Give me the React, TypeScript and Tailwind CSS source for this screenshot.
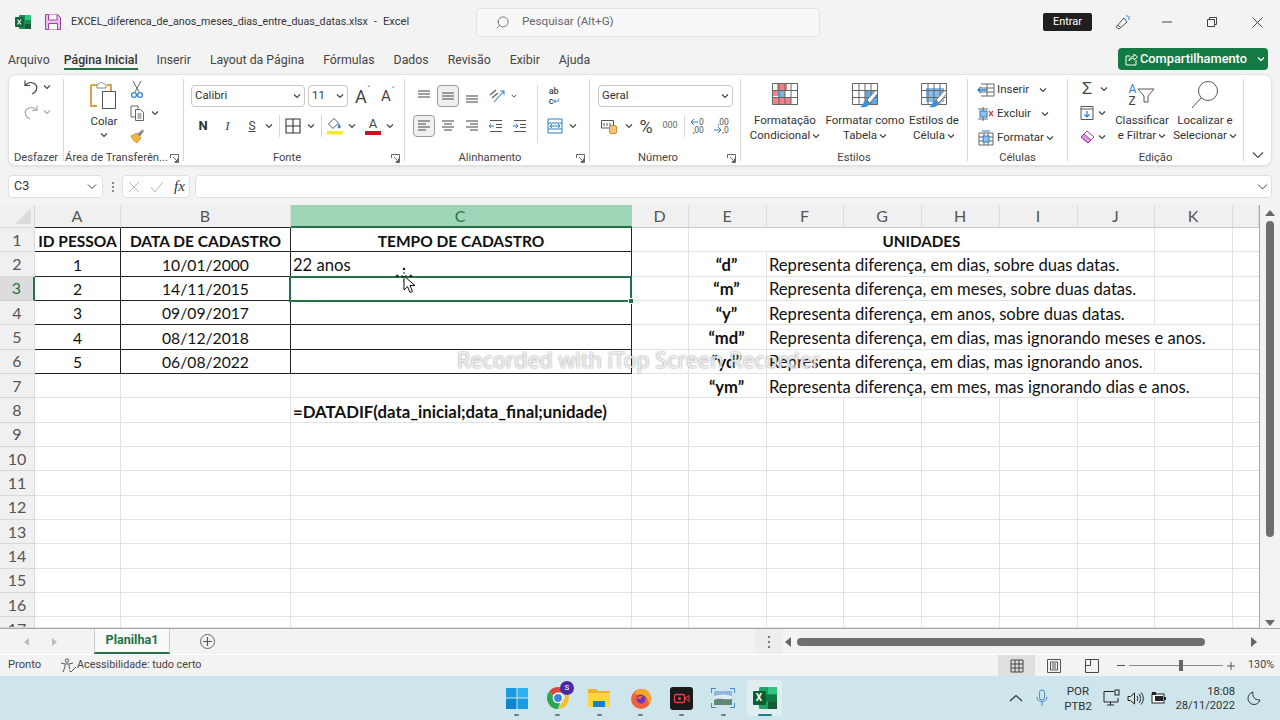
import type { ReactNode } from "react";
import { Search } from "lucide-react";

const ui = "font-['Roboto',sans-serif]";
const cellFont = "font-['Lato',sans-serif]";

function Chev({ color = "#444" }: { color?: string }) {
  return (
    <svg width="8" height="8" viewBox="0 0 8 8">
      <path d="M1 2.5 4 5.5 7 2.5" stroke={color} strokeWidth="1.2" fill="none" />
    </svg>
  );
}

function Launcher() {
  return (
    <svg width="9" height="9" viewBox="0 0 9 9">
      <path d="M.5 4V.5H8.5V8.5H5M3 3l4.5 4.5M7.5 4.5v3h-3" stroke="#666" fill="none" strokeWidth="1" />
    </svg>
  );
}

function Lines({ rows }: { rows: [number, number, number][] }) {
  return (
    <svg width="16" height="16" viewBox="0 0 16 16">
      {rows.map(([y, x1, x2], i) => (
        <path key={i} d={`M${x1} ${y}H${x2}`} stroke="#555" strokeWidth="1.1" />
      ))}
    </svg>
  );
}

function Group({ className, label, launcher, children }: { className: string; label: string; launcher?: boolean; children: ReactNode }) {
  return (
    <div className={`flex flex-col h-full shrink-0 ${className}`}>
      <div className="h-[76px] shrink-0">{children}</div>
      <div className="flex items-center h-[14px] shrink-0">
        <span className="flex-1 text-center text-[11.2px] leading-[14px] text-[#444] whitespace-nowrap">{label}</span>
        {launcher && (
          <span className="w-[14px] shrink-0 flex justify-start pl-[1px]">
            <Launcher />
          </span>
        )}
      </div>
    </div>
  );
}

function Sep() {
  return <div className="w-px my-[4px] bg-[#dadada] shrink-0" />;
}

function Select({ text }: { text: string }) {
  return (
    <div className="flex items-center justify-between h-[22px] bg-white border border-[#c9c9c9] rounded-[4px] px-[3px] text-[11.4px] text-[#333]">
      <span>{text}</span>
      <Chev />
    </div>
  );
}

function Slot({ className, children }: { className: string; children?: ReactNode }) {
  return <div className={`flex items-center justify-center h-[22px] shrink-0 ${className}`}>{children}</div>;
}

function BigBtn({ className, icon, l1, l2 }: { className: string; icon: ReactNode; l1: string; l2: string }) {
  return (
    <div className={`flex flex-col items-center shrink-0 pt-[7px] ${className}`}>
      <div className="h-[28px] flex items-center">{icon}</div>
      <div className="mt-[3px] text-[11.5px] leading-[15px] text-[#333] text-center whitespace-nowrap">{l1}</div>
      <div className="flex items-center gap-[2px] text-[11.5px] leading-[15px] text-[#333] whitespace-nowrap">
        {l2}
        <Chev />
      </div>
    </div>
  );
}

function StyleGrid({ kind }: { kind: "cond" | "table" | "cell" }) {
  return (
    <svg width="28" height="28" viewBox="0 0 28 28">
      {kind === "cond" && (
        <>
          <rect x="6" y="2" width="10" height="6" fill="#f2808a" />
          <rect x="2" y="8" width="8" height="6" fill="#f2808a" />
          <rect x="7" y="9" width="7" height="6" fill="#7fb2e0" />
          <rect x="2" y="15" width="18" height="8" fill="#f2808a" />
        </>
      )}
      {kind === "table" && <rect x="14" y="8" width="12" height="14" fill="#63a9e6" />}
      {kind === "cell" && <rect x="6" y="6" width="18" height="14" fill="#86bdee" />}
      <path d="M1.5 1.5H26.5V22.5H1.5ZM1.5 8.5H26.5M1.5 15.5H26.5M8 1.5V22.5M14 1.5V22.5M20 1.5V22.5" stroke="#666" fill="none" strokeWidth="1" />
      {kind !== "cond" && (
        <>
          <path d="M25 8 16 18l3 3L27 11Z" fill="#fff" stroke="#777" strokeWidth="1" />
          <path d="M15 18c-3 1-2 5-6 7 4 1 9 0 10-4Z" fill="#3f8fd6" />
        </>
      )}
    </svg>
  );
}

function Ribbon() {
  return (
    <div className={`mx-[8px] h-[92px] flex bg-white border border-[#e2e2e2] rounded-[8px] shadow-[0_1px_2px_rgba(0,0,0,0.08)] ${ui}`}>
      <Group className="w-[54px]" label="Desfazer">
        <div className="flex flex-col pl-[13px]">
          <div className="flex items-center h-[24px]">
            <svg width="18" height="18" viewBox="0 0 18 18">
              <path d="M3 2.5v5h5M3.2 7.2C6 4.2 10 3.6 13 6c2.6 2.2 2.2 6-.4 8.5L10 16" stroke="#444" fill="none" strokeWidth="1.2" />
            </svg>
            <span className="ml-[3px]"><Chev /></span>
          </div>
          <div className="flex items-center h-[24px] mt-[1px]">
            <svg width="18" height="18" viewBox="0 0 18 18">
              <path d="M15 2.5v5h-5M14.8 7.2C12 4.2 8 3.6 5 6c-2.6 2.2-2.2 6 .4 8.5L8 16" stroke="#aaa" fill="none" strokeWidth="1.2" />
            </svg>
            <span className="ml-[3px]"><Chev color="#aaa" /></span>
          </div>
        </div>
      </Group>
      <Sep />
      <Group className="w-[119px]" label="Área de Transferên..." launcher>
        <div className="flex pt-[5px]">
          <div className="w-[62px] pl-[18px] flex flex-col items-center">
            <svg width="30" height="30" viewBox="0 0 30 30">
              <path d="M2 5h6M18 5h4v6M8 26H2V5" stroke="#d9a24a" fill="#fff" strokeWidth="2" />
              <path d="M8 5c0-1 1-1 2-1 1-2 4-2 5 0 1 0 2 0 2 1v3H8Z" fill="#fff" stroke="#888" strokeWidth="1" />
              <rect x="13.5" y="11.5" width="13" height="17" fill="#fff" stroke="#555" strokeWidth="1" />
            </svg>
            <div className="text-[11.5px] leading-[15px] text-[#333] mt-[4px]">Colar</div>
            <div className="mt-[2px]"><Chev /></div>
          </div>
          <div className="flex flex-col items-start pl-[2px]">
            <svg width="18" height="20" viewBox="0 0 18 20">
              <path d="M5 1 11 12M13 1 7 12" stroke="#666" strokeWidth="1" />
              <circle cx="6" cy="15" r="2.4" fill="none" stroke="#3a86c8" strokeWidth="1.3" />
              <circle cx="12" cy="15" r="2.4" fill="none" stroke="#3a86c8" strokeWidth="1.3" />
            </svg>
            <div className="flex items-center h-[24px] mt-[1px]">
              <svg width="18" height="18" viewBox="0 0 18 18">
                <path d="M7 13H3V2h7v3" fill="none" stroke="#666" />
                <path d="M7.5 5.5h5l3 3v8h-8Z M9.5 10h4M9.5 12h4M9.5 14h4" fill="none" stroke="#666" />
              </svg>
              <span className="ml-[5px]"><Chev /></span>
            </div>
            <svg width="18" height="18" viewBox="0 0 18 18" className="mt-[2px]">
              <path d="M9 6 3 9c1 3 3 5 6 7l4-5Z" fill="#f2b544" stroke="#b98220" strokeWidth=".7" />
              <path d="M9.5 7l2.5 2.5L16 4l-1.6-1.6Z" fill="#888" />
            </svg>
          </div>
        </div>
      </Group>
      <Sep />
      <Group className="w-[220px]" label="Fonte" launcher>
        <div className="flex flex-col gap-[8px] pt-[10px] pl-[7px]">
          <div className="flex items-center">
            <div className="w-[114px]"><Select text="Calibri" /></div>
            <div className="w-[40px] ml-[3px]"><Select text="11" /></div>
            <Slot className="w-[26px] ml-[2px] text-[18px] text-[#444]">
              <span>A</span><span className="text-[9px] text-[#666] -mt-[10px]">ˆ</span>
            </Slot>
            <Slot className="w-[24px] text-[15px] text-[#444]">
              <span>A</span><span className="text-[9px] text-[#3a86c8] -mt-[9px]">ˇ</span>
            </Slot>
          </div>
          <div className="flex items-center">
            <Slot className="w-[24px] font-bold text-[13px] text-[#333]">N</Slot>
            <Slot className="w-[25px] italic text-[13px] text-[#444] font-['Liberation_Serif',serif]">I</Slot>
            <Slot className="w-[24px] underline text-[12px] text-[#444]">S</Slot>
            <Slot className="w-[10px]"><Chev /></Slot>
            <div className="w-[5px]" />
            <div className="w-px h-[22px] bg-[#d8d8d8]" />
            <Slot className="w-[26px]">
              <svg width="16" height="16" viewBox="0 0 16 16">
                <path d="M1 1H15V15H1ZM8 1V15M1 8H15" stroke="#333" fill="none" strokeWidth="1.1" />
              </svg>
            </Slot>
            <Slot className="w-[10px]"><Chev /></Slot>
            <div className="w-[5px]" />
            <div className="w-px h-[22px] bg-[#d8d8d8]" />
            <Slot className="w-[26px]">
              <svg width="18" height="18" viewBox="0 0 18 18">
                <path d="M8 1.5 2.5 7 7 11.5 12.5 6Z" fill="#fff" stroke="#555" />
                <path d="M13 6.5c1 1.4 1.8 2.4 1.8 3.2a1.6 1.6 0 0 1-3.2 0c0-.8.6-1.6 1.4-3.2Z" fill="#3a86c8" />
                <rect x="1" y="14" width="16" height="3.5" fill="#f5ea2e" />
              </svg>
            </Slot>
            <Slot className="w-[8px]"><Chev /></Slot>
            <div className="w-[5px]" />
            <Slot className="w-[24px]">
              <div className="flex flex-col items-center w-[16px]">
                <span className="text-[13px] leading-[13px] text-[#444]">A</span>
                <div className="w-[16px] h-[4px] bg-[#c8141e] mt-[1px]" />
              </div>
            </Slot>
            <Slot className="w-[10px]"><Chev /></Slot>
          </div>
        </div>
      </Group>
      <Sep />
      <Group className="w-[184px]" label="Alinhamento" launcher>
        <div className="flex pt-[10px] pl-[8px]">
          <div className="flex flex-col gap-[8px]">
            <div className="flex items-center gap-[2px]">
              <Slot className="w-[22px]"><Lines rows={[[3, 2, 14], [6, 2, 14], [9, 2, 14]]} /></Slot>
              <Slot className="w-[22px] bg-[#f0f0f0] border border-[#9a9a9a] rounded-[4px]"><Lines rows={[[5, 2, 14], [8, 2, 14], [11, 2, 14]]} /></Slot>
              <Slot className="w-[22px]"><Lines rows={[[8, 2, 14], [11, 2, 14], [14, 2, 14]]} /></Slot>
              <Slot className="w-[24px]">
                <svg width="18" height="16" viewBox="0 0 18 16">
                  <path d="M2 7 8 2M4 10l6-5" stroke="#666" strokeWidth="1.3" />
                  <path d="M6 14 16 3M12 3h4v4" stroke="#3a86c8" fill="none" strokeWidth="1.1" />
                </svg>
              </Slot>
              <Slot className="w-[6px]"><Chev /></Slot>
            </div>
            <div className="flex items-center gap-[2px]">
              <Slot className="w-[22px] bg-[#f0f0f0] border border-[#9a9a9a] rounded-[4px]"><Lines rows={[[3, 2, 14], [6, 2, 10], [9, 2, 14], [12, 2, 10]]} /></Slot>
              <Slot className="w-[22px]"><Lines rows={[[3, 2, 14], [6, 4, 12], [9, 2, 14], [12, 4, 12]]} /></Slot>
              <Slot className="w-[22px]"><Lines rows={[[3, 2, 14], [6, 6, 14], [9, 2, 14], [12, 6, 14]]} /></Slot>
              <Slot className="w-[22px]">
                <svg width="16" height="16" viewBox="0 0 16 16">
                  <path d="M2 2.5H14M8 6.5H14M8 9.5H14M2 13.5H14" stroke="#555" />
                  <path d="M6 8H1M3 6 1 8l2 2" stroke="#2b7fc4" fill="none" />
                </svg>
              </Slot>
              <Slot className="w-[22px]">
                <svg width="16" height="16" viewBox="0 0 16 16">
                  <path d="M2 2.5H14M8 6.5H14M8 9.5H14M2 13.5H14" stroke="#555" />
                  <path d="M1 8H6M4 6l2 2-2 2" stroke="#2b7fc4" fill="none" />
                </svg>
              </Slot>
            </div>
          </div>
          <div className="w-[6px]" />
          <div className="w-px h-[58px] bg-[#d8d8d8]" />
          <div className="flex flex-col gap-[8px] pl-[6px]">
            <Slot className="w-[22px]">
              <div className="text-[9px] leading-[10px] text-[#444] font-medium">ab<br />c<span className="text-[#2b7fc4]">↵</span></div>
            </Slot>
            <div className="flex items-center">
              <Slot className="w-[22px]">
                <svg width="16" height="16" viewBox="0 0 16 16">
                  <path d="M1 1H15V15H1ZM1 5H15M1 11H15" stroke="#2b7fc4" fill="none" />
                  <path d="M3 8H13M5 6 3 8l2 2M11 6l2 2-2 2" stroke="#2b7fc4" fill="none" />
                </svg>
              </Slot>
              <Slot className="w-[12px] pl-[2px]"><Chev /></Slot>
            </div>
          </div>
        </div>
      </Group>
      <Sep />
      <Group className="w-[150px]" label="Número" launcher>
        <div className="flex flex-col gap-[8px] pt-[10px] pl-[8px]">
          <div className="w-[135px]"><Select text="Geral" /></div>
          <div className="flex items-center">
            <Slot className="w-[20px] ml-[1px]">
              <svg width="16" height="16" viewBox="0 0 16 16">
                <path d="M.5 2.5H12.5V10H.5Z" fill="#fff" stroke="#555" />
                <path d="M3 5v3M6 5v3M9 5v3" stroke="#555" />
                <rect x="8.5" y="7.5" width="7" height="8" rx="1.5" fill="#f6c178" stroke="#d08a2e" />
              </svg>
            </Slot>
            <Slot className="w-[14px] pl-[6px]"><Chev /></Slot>
            <Slot className="w-[26px] text-[18px] text-[#444]">%</Slot>
            <Slot className="w-[22px] text-[9px] text-[#666]">000</Slot>
            <div className="w-px h-[22px] bg-[#d8d8d8] ml-[3px]" />
            <Slot className="w-[24px]">
              <div className="flex flex-col items-end text-[8.5px] leading-[8px] text-[#555]">
                <div className="flex items-center">
                  <svg width="9" height="8" viewBox="0 0 9 8">
                    <path d="M8 4H1M4 1 1 4l3 3" stroke="#2b7fc4" fill="none" />
                  </svg>
                  0
                </div>
                <div>,00</div>
              </div>
            </Slot>
            <Slot className="w-[24px]">
              <div className="flex flex-col items-end text-[8.5px] leading-[8px] text-[#555]">
                <div>,00</div>
                <div className="flex items-center">
                  <svg width="9" height="8" viewBox="0 0 9 8">
                    <path d="M1 4H8M5 1l3 3-3 3" stroke="#2b7fc4" fill="none" />
                  </svg>
                  ,0
                </div>
              </div>
            </Slot>
          </div>
        </div>
      </Group>
      <Sep />
      <Group className="w-[226px]" label="Estilos">
        <div className="flex">
          <BigBtn className="w-[88px]" icon={<StyleGrid kind="cond" />} l1="Formatação" l2="Condicional" />
          <BigBtn className="w-[72px]" icon={<StyleGrid kind="table" />} l1="Formatar como" l2="Tabela" />
          <BigBtn className="w-[66px]" icon={<StyleGrid kind="cell" />} l1="Estilos de" l2="Célula" />
        </div>
      </Group>
      <Sep />
      <Group className="w-[99px]" label="Células">
        <div className="flex flex-col pt-[3px] pl-[9px] text-[11.5px] text-[#333]">
          <div className="flex items-center h-[24px]">
            <svg width="18" height="16" viewBox="0 0 18 16" className="mr-[2px]">
              <path d="M4 2H17V14H4M4 6H17M4 10H17M10 2V14" stroke="#666" fill="none" />
              <path d="M10 8H1M4 5 1 8l3 3" stroke="#2b7fc4" fill="none" strokeWidth="1.3" />
            </svg>
            Inserir
            <span className="ml-[10px]"><Chev /></span>
          </div>
          <div className="flex items-center h-[24px]">
            <svg width="18" height="16" viewBox="0 0 18 16" className="mr-[2px]">
              <path d="M1 3H11M1 13H11M6 1V15" stroke="#666" fill="none" />
              <rect x="3" y="5" width="7" height="6" fill="#8ec2ec" stroke="#2b7fc4" />
              <path d="M12 5l4 5M16 5l-4 5" stroke="#d8434c" strokeWidth="1.3" />
            </svg>
            Excluir
            <span className="ml-[10px]"><Chev /></span>
          </div>
          <div className="flex items-center h-[24px]">
            <svg width="18" height="16" viewBox="0 0 18 16" className="mr-[2px]">
              <path d="M2 3H16V15H2ZM2 7H16M2 11H16M7 3V15M11 3V15" stroke="#666" fill="none" />
              <rect x="6" y="6" width="6" height="6" fill="#8ec2ec" stroke="#2b7fc4" />
              <path d="M5 1H13" stroke="#2b7fc4" />
            </svg>
            Formatar
            <span className="ml-[2px]"><Chev /></span>
          </div>
        </div>
      </Group>
      <Sep />
      <Group className="w-[175px]" label="Edição">
        <div className="flex pt-[2px] pl-[9px]">
          <div className="flex flex-col w-[37px]">
            <div className="flex items-center h-[24px]">
              <span className="w-[20px] text-center text-[17px] text-[#444] font-['Liberation_Sans',sans-serif]">Σ</span>
              <span className="ml-[3px]"><Chev /></span>
            </div>
            <div className="flex items-center h-[24px]">
              <svg width="20" height="16" viewBox="0 0 20 16">
                <path d="M4 1.5H16V14.5H4Z" fill="#fff" stroke="#555" />
                <path d="M4 4H16" stroke="#555" />
                <path d="M10 6V12M7.5 9.5 10 12l2.5-2.5" stroke="#2b7fc4" fill="none" strokeWidth="1.2" />
              </svg>
              <span className="ml-[1px]"><Chev /></span>
            </div>
            <div className="flex items-center h-[24px]">
              <svg width="20" height="16" viewBox="0 0 20 16">
                <path d="M10 2 17 8 11 14 4 8Z" fill="#fff" stroke="#a23ea0" />
                <path d="M7 5 14 11 11 14 4 8Z" fill="#d89be0" stroke="#a23ea0" />
              </svg>
              <span className="ml-[1px]"><Chev /></span>
            </div>
          </div>
          <div className="flex flex-col items-center w-[56px] pt-[4px]">
            <div className="h-[28px] flex items-center text-[#444]">
              <div className="flex flex-col text-[12px] leading-[12px] mr-[1px]">
                <span className="text-[#2b7fc4]">A</span>
                <span>Z</span>
              </div>
              <svg width="18" height="18" viewBox="0 0 18 18">
                <path d="M1 3H17L11 10V16H7V10Z" fill="none" stroke="#555" />
              </svg>
            </div>
            <div className="mt-[4px] text-[11.5px] leading-[15px] text-[#333] whitespace-nowrap">Classificar</div>
            <div className="flex items-center gap-[2px] text-[11.5px] leading-[15px] text-[#333] whitespace-nowrap">e Filtrar<Chev /></div>
          </div>
          <div className="flex flex-col items-center w-[68px] ml-[1px] pt-[4px]">
            <div className="h-[28px] flex items-center">
              <svg width="30" height="30" viewBox="0 0 30 30">
                <circle cx="18" cy="11" r="9.5" fill="none" stroke="#555" />
                <path d="M11 18 2 28" stroke="#555" />
              </svg>
            </div>
            <div className="mt-[4px] text-[11.5px] leading-[15px] text-[#333] whitespace-nowrap">Localizar e</div>
            <div className="flex items-center gap-[2px] text-[11.5px] leading-[15px] text-[#333] whitespace-nowrap">Selecionar<Chev /></div>
          </div>
        </div>
      </Group>
      <Sep />
      <div className="flex-1 flex items-end justify-center pb-[6px]">
        <svg width="12" height="8" viewBox="0 0 12 8">
          <path d="M1 1.5 6 6.5 11 1.5" stroke="#444" fill="none" strokeWidth="1.1" />
        </svg>
      </div>
    </div>
  );
}

const tabs = ["Página Inicial", "Inserir", "Layout da Página", "Fórmulas", "Dados", "Revisão", "Exibir", "Ajuda"];

const colLetters = ["A", "B", "C", "D", "E", "F", "G", "H", "I", "J", "K", ""];
const tableData: Record<number, [string, string, string]> = {
  1: ["ID PESSOA", "DATA DE CADASTRO", "TEMPO DE CADASTRO"],
  2: ["1", "10/01/2000", "22 anos"],
  3: ["2", "14/11/2015", ""],
  4: ["3", "09/09/2017", ""],
  5: ["4", "08/12/2018", ""],
  6: ["5", "06/08/2022", ""],
};
const units: Record<number, [string, string]> = {
  2: ["“d”", "Representa diferença, em dias, sobre duas datas."],
  3: ["“m”", "Representa diferença, em meses, sobre duas datas."],
  4: ["“y”", "Representa diferença, em anos, sobre duas datas."],
  5: ["“md”", "Representa diferença, em dias, mas ignorando meses e anos."],
  6: ["“yd”", "Representa diferença, em dias, mas ignorando anos."],
  7: ["“ym”", "Representa diferença, em mes, mas ignorando dias e anos."],
};

const light = "border-r border-b border-[#e2e2e2]";
const dark = "border-r border-b border-[#222]";
const cell = "flex items-center min-w-0 overflow-hidden whitespace-nowrap pt-[3px]";

function SheetRow({ r }: { r: number }) {
  const t = tableData[r];
  const u = units[r];
  const head = r === 1 ? "font-bold text-[15.5px]" : "text-[15.7px]";
  return (
    <>
      <div
        className={`flex justify-center overflow-hidden ${r === 17 ? "items-start" : "items-center"} text-[16px] ${
          r === 3 ? "bg-[#dcdcdc] text-[#217346] border-r-2 border-r-[#217346] border-b border-b-[#cfcfcf]" : "bg-[#f0f0f0] text-[#555] border-r border-b border-[#d8d8d8]"
        }`}
      >
        {r}
      </div>
      {t ? (
        <>
          <div className={`${cell} ${dark} justify-center ${head}`}>{t[0]}</div>
          <div className={`${cell} ${dark} justify-center ${head}`}>{t[1]}</div>
          <div className={`${cell} ${dark} ${r === 1 ? `justify-center ${head}` : "pl-[2px]"}`}>{t[2]}</div>
        </>
      ) : (
        <>
          <div className={light} />
          <div className={light} />
          <div className={`${cell} ${light} pl-[2px] font-bold text-[16.8px]`}>{r === 8 ? "=DATADIF(data_inicial;data_final;unidade)" : ""}</div>
        </>
      )}
      <div className={light} />
      {r === 1 ? (
        <>
          <div className={`${cell} ${light} col-span-6 justify-center font-bold text-[15.2px]`}>UNIDADES</div>
          <div className={light} />
        </>
      ) : u ? (
        <>
          <div className={`${cell} ${light} justify-center font-bold pr-[2px]`}>{u[0]}</div>
          {r === 5 || r === 7 ? (
            <div className={`${cell} ${light} col-span-6 pl-[2px]`}>{u[1]}</div>
          ) : (
            <>
              <div className={`${cell} ${light} col-span-5 pl-[2px]`}>{u[1]}</div>
              <div className={light} />
            </>
          )}
        </>
      ) : (
        <>
          <div className={light} />
          <div className={light} />
          <div className={light} />
          <div className={light} />
          <div className={light} />
          <div className={light} />
          <div className={light} />
        </>
      )}
      <div className="border-b border-[#e2e2e2]" />
    </>
  );
}

function Sheet() {
  const rowNums = Array.from({ length: 17 }, (_, i) => i + 1);
  return (
    <div className="flex h-[423px] shrink-0 bg-[#f3f3f3]">
      <div
        className={`relative w-[1260px] h-full overflow-hidden bg-white border-r border-[#a8a8a8] grid grid-cols-[35px_86px_170px_341px_57px_78px_77px_78px_78px_78px_77px_78px_26px] grid-rows-[23px_repeat(16,24.33px)_10.67px] text-[16.6px] text-[#111] ${cellFont}`}
      >
        <div className="bg-[#f0f0f0] flex items-end justify-end pr-[3px] pb-[3px] border-r border-b border-[#d8d8d8]">
          <div className="w-0 h-0 border-l-[16px] border-l-transparent border-b-[16px] border-b-[#dcdcdc]" />
        </div>
        {colLetters.map((c, i) => (
          <div
            key={i}
            className={`flex items-center justify-center text-[16px] ${
              c === "C"
                ? "bg-[#9fd5b7] text-[#217346] border-b-2 border-b-[#217346] pr-[3px]"
                : `bg-[#f0f0f0] text-[#555] border-r border-r-[#dcdcdc] border-b pr-[1px] ${i < 2 ? "border-b-[#222]" : "border-b-[#c8c8c8]"}`
            }`}
          >
            {c}
          </div>
        ))}
        {rowNums.map((r) => (
          <SheetRow key={r} r={r} />
        ))}

        <div className="absolute left-[289px] top-[71px] w-[343px] h-[26px] border-2 border-[#217346]">
          <div className="absolute -right-[4px] -bottom-[4px] w-[6px] h-[6px] bg-[#217346] border border-white" />
        </div>

        <svg className="absolute left-[395px] top-[62px]" width="20" height="28" viewBox="0 0 20 28">
          <path d="M9 1v14M2 9h14" stroke="#222" strokeWidth="1" strokeDasharray="2 2" />
          <path d="M9 0 7.5 3h3ZM0 9l3-1.5v3ZM18 9l-3-1.5v3Z" fill="#111" />
          <path d="M9 9v14l3.5-3.5 2.5 6 2.5-1-2.5-6h5Z" fill="#fff" stroke="#111" strokeWidth="1" />
        </svg>

        <div className="absolute left-[457px] top-[142px] text-[21.5px] leading-[26px] text-white/80 whitespace-nowrap font-['Noto_Sans',sans-serif] [text-shadow:0_0_2px_rgba(90,90,90,0.8)]">
          Recorded with iTop Screen Recorder
        </div>
      </div>
      <div className="w-[20px] flex flex-col items-center pt-[5px]">
        <div className="w-0 h-0 border-x-[5px] border-x-transparent border-b-[6px] border-b-[#666]" />
        <div className="w-[8px] h-[316px] mt-[5px] rounded-full bg-[#6e6e6e]" />
        <div className="mt-auto mb-[2px] w-0 h-0 border-x-[5px] border-x-transparent border-t-[6px] border-t-[#666]" />
      </div>
    </div>
  );
}

function SheetTabs() {
  return (
    <div className={`flex items-center h-[26px] shrink-0 border-t border-[#a8a8a8] bg-[#f3f3f3] ${ui}`}>
      <div className="w-[94px] flex items-center pl-[24px] gap-[23px]">
        <div className="w-0 h-0 border-y-[4px] border-y-transparent border-r-[5px] border-r-[#bbb]" />
        <div className="w-0 h-0 border-y-[4px] border-y-transparent border-l-[5px] border-l-[#bbb]" />
      </div>
      <div className="w-[76px] h-full flex items-center justify-center bg-[#fafafa] border-x border-[#c8c8c8] border-b-2 border-b-[#217346] text-[12.6px] font-bold text-[#217346]">
        Planilha1
      </div>
      <div className="ml-[30px] w-[15px] h-[15px] rounded-full border border-[#666] flex items-center justify-center text-[#555]">
        <svg width="9" height="9" viewBox="0 0 9 9">
          <path d="M4.5 0V9M0 4.5H9" stroke="#555" strokeWidth="1.2" />
        </svg>
      </div>
      <div className="ml-[540px] w-[27px] h-full bg-[#ededed] flex flex-col items-center justify-center gap-[3px]">
        <div className="w-[2px] h-[2px] bg-[#777]" />
        <div className="w-[2px] h-[2px] bg-[#777]" />
        <div className="w-[2px] h-[2px] bg-[#777]" />
      </div>
      <div className="ml-[3px] w-0 h-0 border-y-[5px] border-y-transparent border-r-[6px] border-r-[#666]" />
      <div className="ml-[6px] w-[408px] h-[8px] rounded-full bg-[#6e6e6e]" />
      <div className="ml-[46px] w-0 h-0 border-y-[5px] border-y-transparent border-l-[6px] border-l-[#666]" />
    </div>
  );
}

function StatusBar() {
  return (
    <div className={`flex items-center h-[22px] shrink-0 bg-[#f3f3f3] border-t border-white text-[10.8px] text-[#444] ${ui}`}>
      <span className="ml-[8px] w-[33px] whitespace-nowrap text-[11.2px]">Pronto</span>
      <svg className="ml-[19px]" width="17" height="15" viewBox="0 0 17 15">
        <circle cx="7" cy="2.5" r="1.7" fill="none" stroke="#555" />
        <path d="M1 5c4 1.4 8 1.4 12 0M5 6.5V9l-2 5M9 6.5V9l1 2M9 12l2 2 5-5" fill="none" stroke="#555" />
      </svg>
      <span className="whitespace-nowrap">Acessibilidade: tudo certo</span>
      <div className="ml-auto flex items-center h-full">
        <div className="w-[37px] h-full bg-[#dfdfdf] flex items-center justify-center">
          <svg width="14" height="14" viewBox="0 0 14 14">
            <path d="M1 1H13V13H1ZM1 5H13M1 9H13M5 1V13M9 1V13" stroke="#444" fill="none" />
          </svg>
        </div>
        <div className="w-[38px] flex justify-center">
          <svg width="14" height="14" viewBox="0 0 14 14">
            <path d="M.5.5H13.5V13.5H.5ZM3.5 3H10.5V11H3.5ZM5 5H9M5 7H9M5 9H9" stroke="#555" fill="none" />
          </svg>
        </div>
        <div className="w-[38px] flex justify-center">
          <svg width="14" height="14" viewBox="0 0 14 14">
            <path d="M.5.5H13.5V13.5H.5ZM5.5.5V6.5H.5" stroke="#444" fill="none" />
          </svg>
        </div>
        <div className="ml-[6px] w-[8px] h-px bg-[#555]" />
        <div className="relative ml-[4px] w-[94px] h-px bg-[#888]">
          <div className="absolute left-[50px] -top-[5px] w-[4px] h-[11px] bg-[#666]" />
        </div>
        <svg className="ml-[4px]" width="8" height="8" viewBox="0 0 8 8">
          <path d="M4 0V8M0 4H8" stroke="#555" />
        </svg>
        <span className="ml-[13px] mr-[8px] w-[24px] text-[10.8px]">130%</span>
      </div>
    </div>
  );
}

function TaskIcon({ children, active }: { children: ReactNode; active?: boolean }) {
  return (
    <div className="w-[41.33px] h-full flex flex-col items-center justify-center relative">
      <div className={`w-[35px] h-[36px] flex items-center justify-center rounded-[4px] ${active ? "bg-[#e0eef1]" : ""}`}>{children}</div>
      <div className={`absolute bottom-[4px] h-[2px] rounded-full ${active ? "w-[14px] bg-[#1f7f8c]" : "w-[5px] bg-[#777]"}`} />
    </div>
  );
}

function Taskbar() {
  return (
    <div className={`flex items-center h-[44px] shrink-0 bg-[#cde5eb] pl-[496px] ${ui}`}>
      <TaskIcon>
        <svg width="22" height="22" viewBox="0 0 22 22">
          <path d="M0 1h10.5v9.5H0Z" fill="#1a9be0" />
          <path d="M11.5 1H22v9.5H11.5Z" fill="#2cb2ee" />
          <path d="M0 11.5h10.5V22H0Z" fill="#0f84d0" />
          <path d="M11.5 11.5H22V22H11.5Z" fill="#1a9be0" />
        </svg>
      </TaskIcon>
      <TaskIcon>
        <div className="relative w-[22px] h-[22px]">
          <svg width="22" height="22" viewBox="0 0 22 22">
            <path d="M11 0a11 11 0 0 1 9.5 5.5H11a5.5 5.5 0 0 0-5.2 3.5L2.6 4A11 11 0 0 1 11 0Z" fill="#e0453a" />
            <path d="M20.5 5.5A11 11 0 0 1 11 22l5-8a5.5 5.5 0 0 0 0-8.5Z" fill="#f6c028" />
            <path d="M2.6 4 7 11a5 5 0 0 0 6 5l-2 6A11 11 0 0 1 2.6 4Z" fill="#2ea650" />
            <circle cx="11" cy="11" r="4.6" fill="#3d82e8" stroke="#fff" strokeWidth="1.4" />
          </svg>
          <div className="absolute -right-[5px] -top-[6px] w-[14px] h-[14px] rounded-full bg-[#4a2a9c] text-white text-[8px] flex items-center justify-center">S</div>
        </div>
      </TaskIcon>
      <TaskIcon>
        <svg width="24" height="22" viewBox="0 0 24 22">
          <path d="M1 2h8l2 2h12v16H1Z" fill="#f0b429" />
          <path d="M1 6h22v14H1Z" fill="#fbd34d" />
          <path d="M6 14h12v6H6Z" fill="#1a7fc4" />
        </svg>
      </TaskIcon>
      <TaskIcon>
        <svg width="24" height="24" viewBox="0 0 24 24">
          <circle cx="12" cy="13" r="10" fill="#f2613a" />
          <path d="M5 8c3-5 10-7 15-2 3 4 2 9 0 12-1-6-4-9-8-9Z" fill="#f9a825" />
          <circle cx="12" cy="13" r="4.5" fill="#6a3bb8" />
          <path d="M8 13c1-3 4-4 7-3-2 0-3 2-3 3Z" fill="#f2613a" />
        </svg>
      </TaskIcon>
      <TaskIcon>
        <svg width="23" height="23" viewBox="0 0 23 23">
          <rect width="23" height="23" rx="3" fill="#1a1a1a" />
          <rect x="4.5" y="7.5" width="10" height="8" rx="1.5" fill="none" stroke="#e8414d" strokeWidth="1.3" />
          <path d="M15 11 19 8.5V14.5Z" fill="none" stroke="#e8414d" />
          <circle cx="9.5" cy="11.5" r="1.5" fill="#e8414d" />
        </svg>
      </TaskIcon>
      <TaskIcon>
        <svg width="24" height="20" viewBox="0 0 24 20">
          <rect x="3" y="3" width="18" height="14" fill="#dfeaf2" />
          <path d="M3 12c4-3 8 0 18-1v6H3Z" fill="#5e8a74" />
          <path d="M3 3h18v5c-6-2-12-2-18 0Z" fill="#8db8dc" />
          <path d="M0 5V0h5M19 0h5v5M24 15v5h-5M5 20H0v-5" stroke="#4a8cc4" strokeWidth="2" fill="none" />
        </svg>
      </TaskIcon>
      <TaskIcon active>
        <div className="relative w-[24px] h-[22px]">
          <svg width="24" height="22" viewBox="0 0 24 22">
            <rect x="6" y="0" width="18" height="22" rx="1.5" fill="#21a366" />
            <rect x="15" y="0" width="9" height="7.5" fill="#33c481" />
            <rect x="6" y="7.5" width="18" height="7" fill="#107c41" />
            <rect x="15" y="14.5" width="9" height="7.5" fill="#185c37" />
            <rect x="0" y="4" width="13" height="14" rx="1" fill="#0b5d33" />
          </svg>
          <span className="absolute left-[3px] top-[5px] text-white text-[10px] leading-[12px] font-bold">X</span>
        </div>
      </TaskIcon>
      <div className="ml-auto flex items-center text-[11.5px] text-[#333]">
        <svg width="14" height="8" viewBox="0 0 14 8" className="mr-[13px]">
          <path d="M1 7 7 1.5 13 7" stroke="#333" fill="none" strokeWidth="1.2" />
        </svg>
        <svg width="12" height="18" viewBox="0 0 12 18" className="mr-[13px]">
          <rect x="3.5" y="1" width="5" height="10" rx="2.5" fill="none" stroke="#4a8cc4" />
          <path d="M1 8c0 6 10 6 10 0M6 13v4" stroke="#4a8cc4" fill="none" />
        </svg>
        <div className="w-[34px] text-center leading-[15px] mr-[8px] mt-[2px]">POR<br />PTB2</div>
        <svg width="18" height="18" viewBox="0 0 18 18" className="mr-[6px]">
          <path d="M11 2.5H1V13H15V9M4 16H11M7.5 13V16" stroke="#222" fill="none" />
          <rect x="12" y="1" width="4" height="5" fill="none" stroke="#222" />
        </svg>
        <svg width="17" height="15" viewBox="0 0 17 15" className="mr-[7px]">
          <path d="M1 5.5V9.5H3.5L7.5 13V2L3.5 5.5ZM10 5c1 1.5 1 3.5 0 5M12 3c2 2.5 2 6.5 0 9M14 1.5c3 3.5 3 8.5 0 12" stroke="#222" fill="none" />
        </svg>
        <svg width="16" height="12" viewBox="0 0 16 12" className="mr-[2px]">
          <rect x="1" y="2" width="12" height="9" fill="#fff" stroke="#222" />
          <rect x="4" y="4" width="8" height="5" fill="#222" />
          <rect x="13" y="5" width="2" height="3" fill="#222" />
          <path d="M1 0h4v3H1Z" fill="#222" />
        </svg>
        <div className="w-[66px] text-right leading-[14px] mr-[12px] mt-[2px] text-[11.2px]">18:08<br />28/11/2022</div>
        <svg width="14" height="14" viewBox="0 0 14 14" className="mr-[19px]">
          <path d="M6 1c-1 4 1 8 7 8-1 3-3.5 4.5-6 4.5A6 6 0 0 1 1 7.5C1 4.5 3 2 6 1Z" fill="none" stroke="#333" />
        </svg>
      </div>
    </div>
  );
}

export default function App() {
  return (
    <div className={`w-[1280px] h-[720px] flex flex-col overflow-hidden bg-[#f3f3f3] ${ui}`}>
      {/* title bar */}
      <div className="flex items-center h-[44px] shrink-0">
        <div className="w-[476px] flex items-center pl-[15px]">
          <svg width="16" height="16" viewBox="0 0 16 16">
            <rect x="4" y="1" width="12" height="14" rx="1" fill="#1d8a52" />
            <rect x="10" y="1" width="6" height="5" fill="#33c481" />
            <rect x="10" y="10" width="6" height="5" fill="#185c37" />
            <rect x="0" y="3" width="9" height="10" rx="1" fill="#0b6a3a" />
            <path d="M2.5 5.5 6 10.5M6 5.5 2.5 10.5" stroke="#fff" strokeWidth="1.1" />
          </svg>
          <svg className="ml-[14px]" width="16" height="16" viewBox="0 0 16 16">
            <path d="M.5.5H12.5L15.5 3.5V15.5H.5Z" fill="#e9c4ea" stroke="#a33ea3" />
            <path d="M3.5.5V6H12V.5M3.5 15.5V9.5H12.5V15.5" fill="#fff" stroke="#a33ea3" />
          </svg>
          <span className="ml-[10px] text-[10.7px] text-[#333] whitespace-nowrap">EXCEL_diferenca_de_anos_meses_dias_entre_duas_datas.xlsx</span>
          <span className="ml-[6px] text-[11.2px] text-[#333]">-</span>
          <span className="ml-[6px] text-[11.2px] text-[#333]">Excel</span>
        </div>
        <div className="w-[344px] h-[29px] flex items-center bg-[#f8f8f8] border border-[#e4e4e4] rounded-[4px] pl-[18px]">
          <Search size={15} strokeWidth={1.2} color="#555" className="-scale-x-100" />
          <span className="ml-[12px] text-[11.7px] text-[#666]">Pesquisar (Alt+G)</span>
        </div>
        <div className="flex-1 flex items-center justify-end">
          <div className="w-[49px] h-[18px] bg-[#1f1f1f] rounded-[2px] text-white text-[11px] flex items-center justify-center">Entrar</div>
          <svg className="ml-[23px]" width="16" height="16" viewBox="0 0 16 16">
            <path d="M1 13 9 4 12 8 4 15ZM3 11 6 14" stroke="#555" fill="none" />
            <path d="M12 1v2M15 2l-2 2M15 5h-2" stroke="#3a86c8" strokeWidth="1" />
          </svg>
          <svg className="ml-[31px]" width="10" height="2" viewBox="0 0 10 2">
            <path d="M0 1H10" stroke="#444" />
          </svg>
          <svg className="ml-[35px]" width="10" height="10" viewBox="0 0 10 10">
            <path d="M.5 2.5H7.5V9.5H.5ZM2.5 2.5V.5H9.5V7.5H7.5" stroke="#444" fill="none" />
          </svg>
          <svg className="ml-[35px] mr-[17px]" width="11" height="11" viewBox="0 0 11 11">
            <path d="M.5.5 10.5 10.5M10.5.5 .5 10.5" stroke="#444" />
          </svg>
        </div>
      </div>

      {/* tabs */}
      <div className="flex items-start h-[30px] shrink-0 pl-[8px] pr-[8px] text-[12.3px] text-[#444]">
        <div className="h-[26px] mt-[3px] mr-[14px] flex items-center whitespace-nowrap">Arquivo</div>
        <div className="flex gap-[19px]">
          {tabs.map((t) => (
            <div key={t} className="relative h-[26px] mt-[3px] flex items-center whitespace-nowrap">
              <span className={t === "Página Inicial" ? "text-[#333] font-medium" : ""}>{t}</span>
              {t === "Página Inicial" && <div className="absolute left-0 right-0 bottom-[3px] h-[2px] bg-[#217346]" />}
            </div>
          ))}
        </div>
        <div className="ml-auto mr-[4px] mt-[4px] w-[150px] h-[22px] bg-[#137a43] rounded-[4px] flex items-center text-white text-[12.8px] font-medium pl-[7px]">
          <svg width="13" height="13" viewBox="0 0 13 13">
            <path d="M5 3H1V12H11V7M4 8c0-3 3-5 5-5V1l3.5 3L9 7V5C7 5 5 6 4 8Z" stroke="#fff" fill="none" />
          </svg>
          <span className="ml-[2px] whitespace-nowrap">Compartilhamento</span>
          <span className="ml-auto mr-[3px]"><Chev color="#fff" /></span>
        </div>
      </div>

      <Ribbon />

      {/* formula bar */}
      <div className="flex items-center h-[39px] shrink-0 pt-[9px] pb-[7px] px-[8px]">
        <div className="w-[95px] h-[23px] flex items-center justify-between bg-white border border-[#e0e0e0] rounded-[4px] px-[5px] text-[12.5px] text-[#333]">
          C3
          <svg width="10" height="8" viewBox="0 0 10 8">
            <path d="M1 1.5 5 5.5 9 1.5" stroke="#444" fill="none" />
          </svg>
        </div>
        <div className="w-[19px] flex flex-col items-center gap-[2px]">
          <div className="w-[2px] h-[2px] bg-[#888]" />
          <div className="w-[2px] h-[2px] bg-[#888]" />
          <div className="w-[2px] h-[2px] bg-[#888]" />
        </div>
        <div className="w-[68px] h-[23px] flex items-center bg-white border border-[#e0e0e0] rounded-[4px] pl-[5px]">
          <svg width="12" height="12" viewBox="0 0 12 12">
            <path d="M1 1 11 11M11 1 1 11" stroke="#bbb" />
          </svg>
          <svg className="ml-[10px]" width="14" height="12" viewBox="0 0 14 12">
            <path d="M1 6 5 11 13 1" stroke="#bbb" fill="none" />
          </svg>
          <span className="ml-[10px] text-[15px] italic text-[#333] font-['Liberation_Serif',serif]">fx</span>
        </div>
        <div className="ml-[5px] flex-1 h-[23px] flex items-center justify-end bg-white border border-[#e0e0e0] rounded-[4px] pr-[3px]">
          <svg width="11" height="8" viewBox="0 0 11 8">
            <path d="M1 1.5 5.5 6 10 1.5" stroke="#444" fill="none" />
          </svg>
        </div>
      </div>

      <Sheet />
      <SheetTabs />
      <StatusBar />
      <Taskbar />
    </div>
  );
}
